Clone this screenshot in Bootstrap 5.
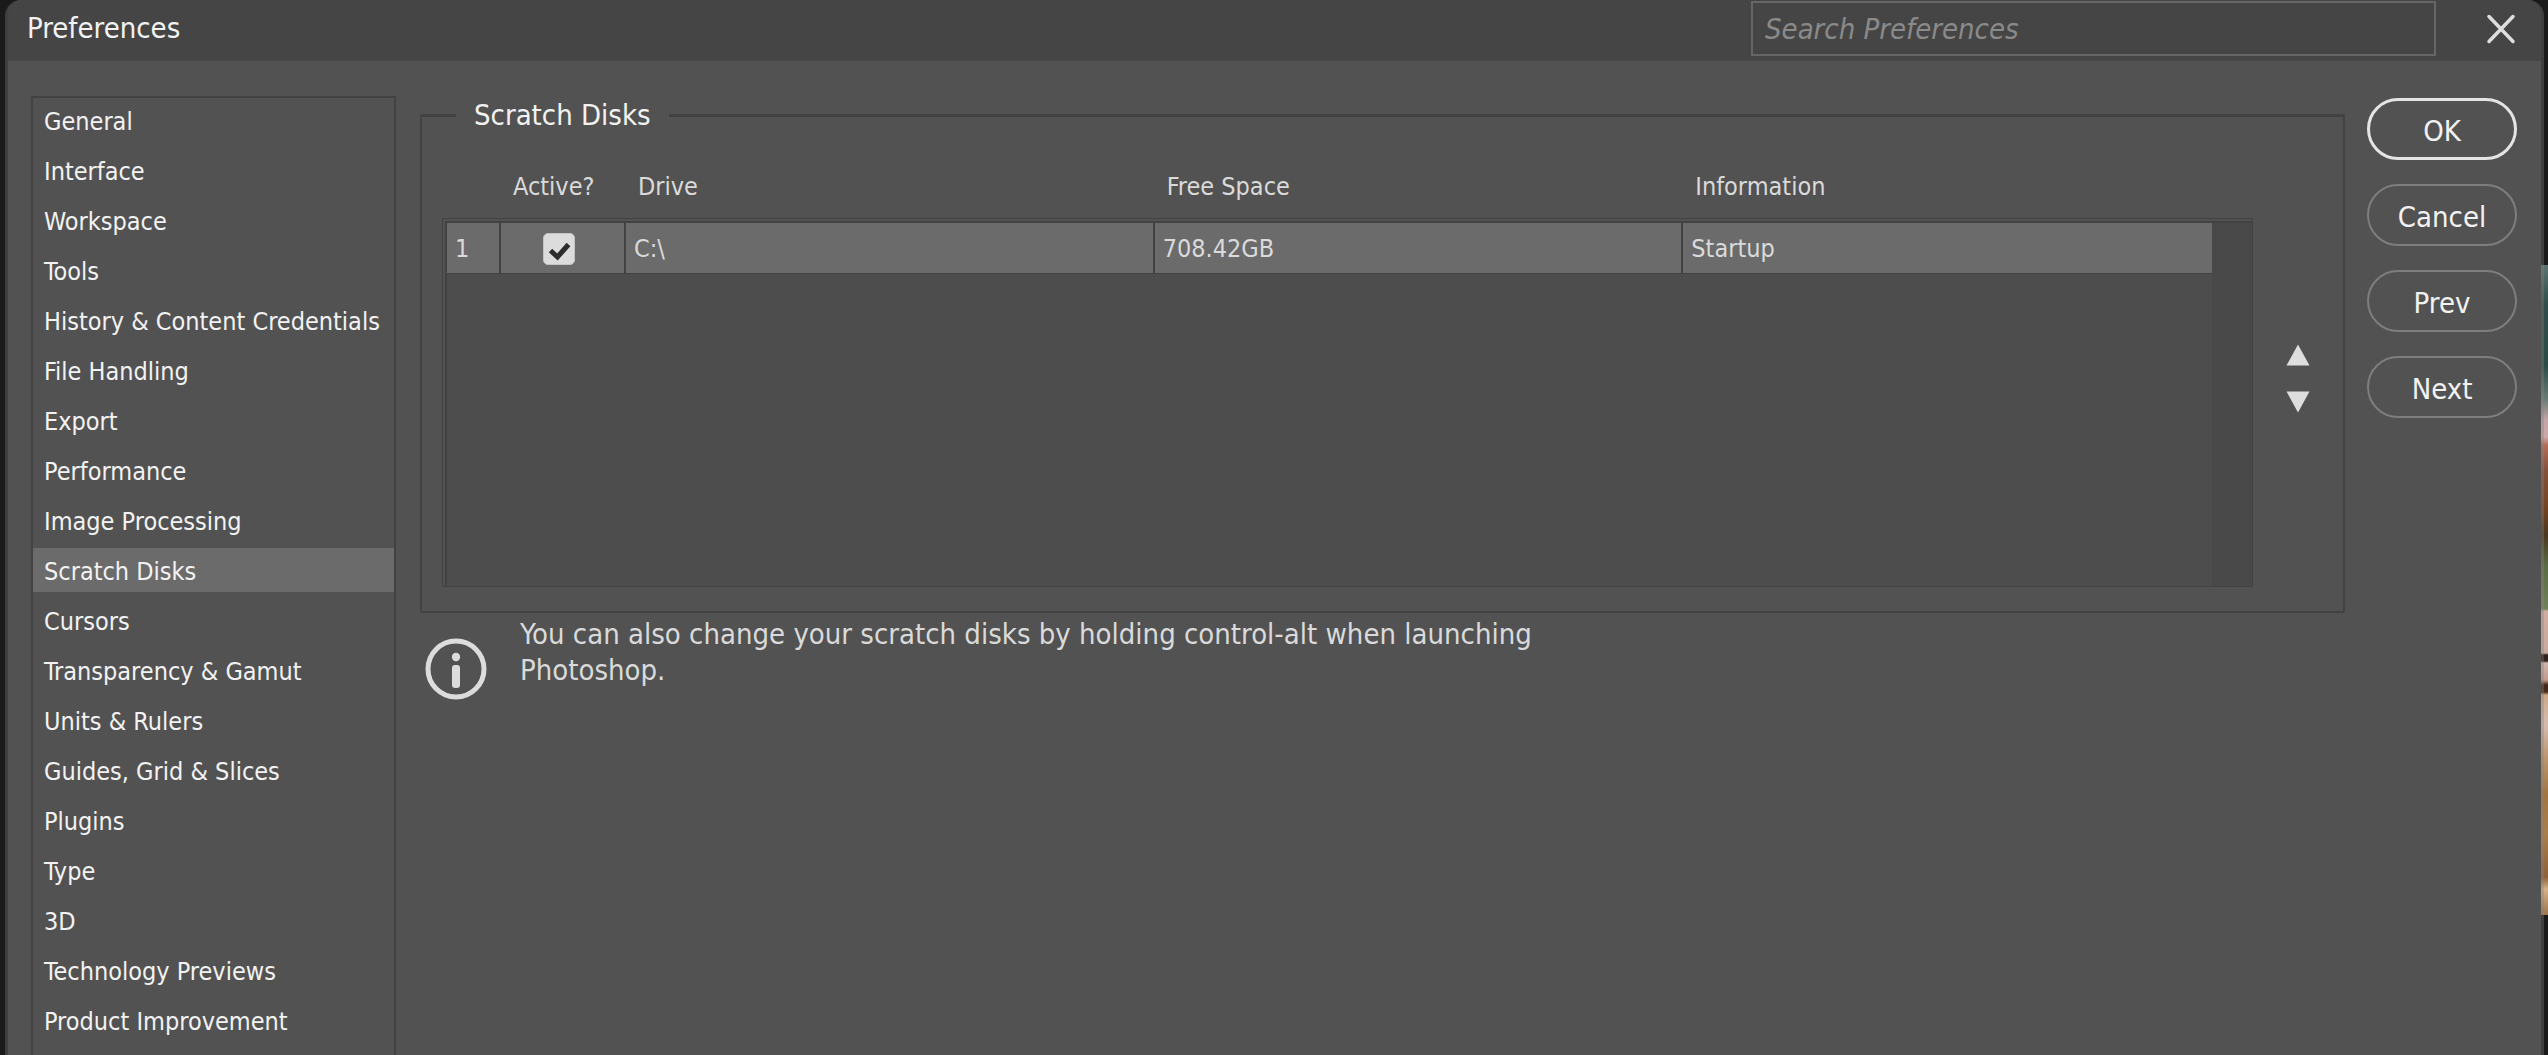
<!DOCTYPE html>
<html lang="en">
<head>
<meta charset="utf-8">
<meta name="viewport" content="width=device-width, initial-scale=1">
<title>Preferences</title>
<link href="https://cdn.jsdelivr.net/npm/bootstrap@5.3.0/dist/css/bootstrap.min.css" rel="stylesheet">
<style>
:root { --panel: #525252; --bar: #454545; --line: #424242; --row: #6b6b6b; --well: #4b4b4b; --ink: #f2f2f2; --soft: #dadada; }
body { background: #1a1a1a; color: var(--ink); font: 25px/36px "DejaVu Sans Condensed", "DejaVu Sans", sans-serif; font-stretch: condensed; overflow: hidden; }
.fs-big { font-size: 29px; }
/* canvas of the open document, visible at the right of the dialog */
.canvas-strip {
  position: absolute; top: 265px; right: 0; width: 10px; height: 650px; z-index: -1;
  background: linear-gradient(#5b7270 0, #2f4d4a 40px, #2c4b47 100px, #6c7c76 135px, #c5a5a7 155px, #cda9a8 172px, #b56d57 180px, #84503a 205px, #71421f 245px, #4b3820 270px, #596a44 300px, #718257 344px, #d0ac9d 346px, #c9aaa0 388px, #2d211c 390px, #33241d 396px, #cfb4ae 398px, #c39a8a 415px, #40261a 420px, #4a2c1c 427px, #cda886 430px, #d6bcae 460px, #bd9872 490px, #a27440 530px, #aa7e4a 570px, #8d6037 612px, #d5b187 624px, #9e744c 650px);
}
.dialog { margin: 0 4px 0 5px; border: 3px solid rgba(130,130,130,.36); border-top: 0; border-bottom: 0; border-radius: 16px 16px 0 0; background: var(--panel); background-clip: padding-box; }
.title-bar { background: var(--bar); height: 61px; padding: 0 24px 4px 19px; border-radius: 13px 13px 0 0; }
.search-box { width: 685px; height: 55px; border: 2px solid #666; background: transparent; padding: 0 12px; margin-right: 49px; color: var(--ink); border-radius: 0; }
.search-box::placeholder { color: #8a8a8a; font-style: italic; opacity: 1; }
.icon-btn { background: none; border: 0; padding: 0; display: flex; align-items: center; justify-content: center; }
.dialog-body { padding: 35px 24px 0 23px; gap: 24px; }
.side-list { width: 365px; border: 2px solid var(--line); border-bottom: 0; gap: 6px; }
.side-list a { display: block; height: 44px; line-height: 40px; padding: 4px 11px 0; color: var(--ink); text-decoration: none; white-space: nowrap; }
.side-list a.active { background: var(--row); }
.disk-group { border: 2px solid var(--line); border-top-width: 3px; border-radius: 2px; padding: 0 0 24px 20px; margin-top: 1px; }
.disk-group legend { float: none; width: auto; margin: 0 0 0 14px; padding: 0 18px; line-height: 36px; }
.disk-grid { position: relative; z-index: 0; min-height: 454px; padding: 0 41px 0 5px; }
.disk-grid::before, .disk-grid::after { content: ""; position: absolute; z-index: -1; }
.disk-grid::before { inset: 85px 0 0 0; border: 1px solid var(--line); }
.disk-grid::after { inset: 88px 1px 1px 3px; border: 2px solid var(--line); border-width: 2px 0 0 2px; background: linear-gradient(to left, #494949 40px, #4d4d4d 40px); }
.disk-table { width: 100%; table-layout: fixed; border-collapse: separate; border-spacing: 0; color: var(--soft); }
.disk-table th { height: 90px; padding: 18px 0 0 12px; font-weight: 400; vertical-align: middle; }
.disk-table td { height: 51px; padding: 2px 8px 0; background: var(--row); border-right: 2px solid var(--line); border-bottom: 1px solid var(--line); }
.disk-table td:last-child { border-right: 0; }
.disk-table .tick-cell { padding: 2px 8px 0 0; }
.col-num { width: 54px; }
.col-active { width: 125px; }
.tick { appearance: none; display: block; width: 32px; height: 32px; margin: 0 auto; border: 1px solid #c4c4c4; border-radius: 5px; background: #dcdcdc; }
.tick:checked { background: #dcdcdc url("data:image/svg+xml,%3Csvg xmlns='http://www.w3.org/2000/svg' viewBox='0 0 30 30'%3E%3Cpath d='M6.5 16.5l7 6.5L24.500 10.500' fill='none' stroke='%232d2d2d' stroke-width='5'/%3E%3C/svg%3E") center/30px no-repeat; }
.movers { width: 90px; padding-top: 36px; }
.movers button { height: 47px; width: 47px; }
.note { margin: 3px 0 0 5px; gap: 33px; color: var(--soft); }
.note svg { margin-top: 22px; }
.note p { max-width: 1120px; }
.actions { width: 150px; margin: 2px 0 0 -2px; gap: 24px; }
.pill { height: 62px; padding: 4px 0 0; border: 2px solid #7e7e7e; border-radius: 31px; background: none; color: var(--ink); }
.pill-main { border-width: 3px; border-color: #e4e4e4; }
</style>
</head>
<body>
<div class="canvas-strip"></div>
<div class="dialog min-vh-100 d-flex flex-column">
  <header class="title-bar d-flex align-items-center">
    <h1 class="fs-big fw-normal m-0 me-auto">Preferences</h1>
    <input class="search-box fs-big" type="search" placeholder="Search Preferences" aria-label="Search Preferences">
    <button class="icon-btn" type="button" aria-label="Close">
      <svg width="32" height="32" viewBox="0 0 32 32" fill="none" stroke="#dedede" stroke-width="3.500" stroke-linecap="round"><path d="M4 3.500l24 25M28 3.500l-24 25"/></svg>
    </button>
  </header>
  <div class="dialog-body d-flex flex-grow-1">
    <nav class="side-list d-flex flex-column flex-shrink-0" aria-label="Categories">
      <a href="#">General</a>
      <a href="#">Interface</a>
      <a href="#">Workspace</a>
      <a href="#">Tools</a>
      <a href="#">History &amp; Content Credentials</a>
      <a href="#">File Handling</a>
      <a href="#">Export</a>
      <a href="#">Performance</a>
      <a href="#">Image Processing</a>
      <a href="#" class="active" aria-current="page">Scratch Disks</a>
      <a href="#">Cursors</a>
      <a href="#">Transparency &amp; Gamut</a>
      <a href="#">Units &amp; Rulers</a>
      <a href="#">Guides, Grid &amp; Slices</a>
      <a href="#">Plugins</a>
      <a href="#">Type</a>
      <a href="#">3D</a>
      <a href="#">Technology Previews</a>
      <a href="#">Product Improvement</a>
    </nav>
    <main class="flex-grow-1">
      <fieldset class="disk-group">
        <legend class="fs-big">Scratch Disks</legend>
        <div class="d-flex">
          <div class="disk-grid flex-grow-1">
            <table class="disk-table">
              <thead>
                <tr><th class="col-num"></th><th class="col-active" scope="col">Active?</th><th scope="col">Drive</th><th scope="col">Free Space</th><th scope="col">Information</th></tr>
              </thead>
              <tbody>
                <tr><td>1</td><td class="tick-cell"><input class="tick" type="checkbox" checked aria-label="Use drive C as a scratch disk"></td><td>C:\</td><td>708.42GB</td><td>Startup</td></tr>
              </tbody>
            </table>
          </div>
          <div class="movers d-flex flex-column flex-shrink-0 align-items-center justify-content-center">
            <button class="icon-btn" type="button" aria-label="Move up"><svg width="24" height="22" viewBox="0 0 24 22" fill="#dedede"><path d="M12 .5L23.500 21.500H.5z"/></svg></button>
            <button class="icon-btn" type="button" aria-label="Move down"><svg width="24" height="22" viewBox="0 0 24 22" fill="#dedede"><path d="M12 21.500L.5.5h23z"/></svg></button>
          </div>
        </div>
      </fieldset>
      <div class="note d-flex align-items-start">
        <svg class="flex-shrink-0" width="62" height="62" viewBox="0 0 62 62"><circle cx="31" cy="31" r="28" fill="none" stroke="#dcdcdc" stroke-width="5"/><circle cx="31" cy="19" r="4.200" fill="#dcdcdc"/><rect x="27" y="27" width="8" height="23" rx="3" fill="#dcdcdc"/></svg>
        <p class="fs-big m-0">You can also change your scratch disks by holding control-alt when launching Photoshop.</p>
      </div>
    </main>
    <div class="actions d-flex flex-column flex-shrink-0">
      <button class="pill pill-main fs-big" type="button">OK</button>
      <button class="pill fs-big" type="button">Cancel</button>
      <button class="pill fs-big" type="button">Prev</button>
      <button class="pill fs-big" type="button">Next</button>
    </div>
  </div>
</div>
<script src="https://cdn.jsdelivr.net/npm/bootstrap@5.3.0/dist/js/bootstrap.bundle.min.js"></script>
</body>
</html>
